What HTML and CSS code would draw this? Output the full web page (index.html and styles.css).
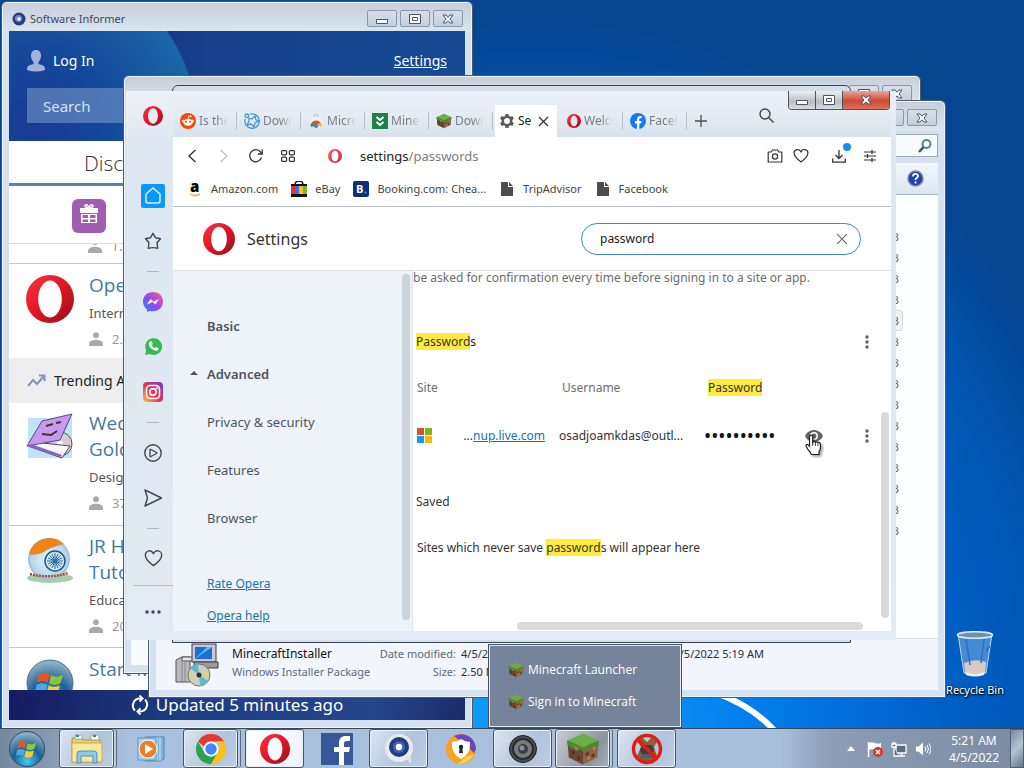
FILE: index.html
```html
<!DOCTYPE html>
<html lang="en">
<head>
<meta charset="utf-8">
<title>Desktop</title>
<link rel="stylesheet" href="styles.css">
</head>
<body>
<svg class="defs" aria-hidden="true">
  <defs>
    <linearGradient id="red" x1="0" y1="0" x2="1" y2="1"><stop offset="0" stop-color="#ff3340"/><stop offset=".5" stop-color="#e01526"/><stop offset="1" stop-color="#980d18"/></linearGradient>
    <linearGradient id="msg" x1="0" y1="1" x2="1" y2="0"><stop offset="0" stop-color="#1592ff"/><stop offset=".5" stop-color="#9a45f5"/><stop offset="1" stop-color="#ff6670"/></linearGradient>
    <linearGradient id="insta" x1="0" y1="1" x2="1" y2="0"><stop offset="0" stop-color="#fdc44f"/><stop offset=".45" stop-color="#e8364f"/><stop offset="1" stop-color="#7638c8"/></linearGradient>
    <radialGradient id="orb" cx=".5" cy=".85" r=".8"><stop offset="0" stop-color="#3fd0ec"/><stop offset=".5" stop-color="#1c5f93"/><stop offset="1" stop-color="#8fb0c6"/></radialGradient>
    <radialGradient id="ball" cx=".5" cy=".5" r=".6"><stop offset="0" stop-color="#e8f4fb"/><stop offset=".7" stop-color="#b7d8ec"/><stop offset="1" stop-color="#6f9ab4"/></radialGradient>
  </defs>
  <symbol id="opera" viewBox="0 0 24 24"><path fill="url(#red)" fill-rule="evenodd" d="M12 0a12 12 0 1 0 0 24 12 12 0 0 0 0-24zm0 2.800c3.300 0 5.900 4.100 5.900 9.200s-2.600 9.200-5.900 9.200S6.100 17.100 6.100 12 8.700 2.800 12 2.800z"/></symbol>
  <symbol id="block" viewBox="0 0 24 24"><path fill="#6cae45" d="M12 1 23 6 12 11 1 6z"/><path fill="#6a4630" d="M1 6l11 5v12L2 18z"/><path fill="#8d6243" d="M23 6l-11 5v12l10-5z"/><path fill="#4c8a30" d="M1 6l11 5v3l-2-2-2 2-2-3-2 1-3-3zM23 6l-11 5v3l2-2 2 1 2-3 2 1 3-2z"/><path fill="#4a2f1f" d="M4 13l2 1v2l-2-1zM8 17l2 1v2l-2-1zM14 15l2-1v2l-2 1zM18 16l2-1v2l-2 1z"/><path fill="#b08660" d="M15 18l2-1v2l-2 1zM19 11l2-1v2l-2 1zM6 10l2 1v2l-2-1z"/></symbol>
  <symbol id="winflag" viewBox="0 0 24 24"><path fill="#e8532a" d="M3 5c3-2 5-2 8 0l-1.500 6c-3-1.500-5-1.500-8 0z"/><path fill="#8cc63e" d="M12 5.500c3 1.500 5 1.500 9-.5l-2 6.500c-3 1.500-5 1.500-8.500 0z"/><path fill="#4aa8e8" d="M1.200 12.500c3-1.500 5-1.500 8 0l-1.500 6c-3-1.500-5-1.500-7.700 0z"/><path fill="#fcc92e" d="M10.300 13c3 1.500 5 1.500 8.500 0l-2 6.500c-3 1.500-5 1.500-8 0z"/></symbol>
  <symbol id="user" viewBox="0 0 14 14"><circle cx="7" cy="3.200" r="2.900"/><path d="M0 14v-2c0-3 4-4.300 7-4.300s7 1.300 7 4.300v2z"/></symbol>
  <symbol id="heart" viewBox="0 0 20 20"><path d="M10 17.500C4 13 1.500 10.500 1.500 7a4.300 4.300 0 0 1 8.500-1.500A4.300 4.300 0 0 1 18.500 7c0 3.500-2.500 6-8.500 10.500z"/></symbol>
  <symbol id="page" viewBox="0 0 12 14"><path fill="#4d4d4d" d="M0 0h7v5h5v9H0z"/><path fill="#4d4d4d" d="M8 0l4 4H8z"/></symbol>
  <symbol id="cx" viewBox="0 0 12 10"><path d="M1 1h3l2 2.200L8 1h3L8 5l3 4H8L6 6.800 4 9H1l3-4z" fill="#fff" stroke="#4b5366" stroke-width="1"/></symbol>
  <symbol id="cmax" viewBox="0 0 12 10"><path d="M.5.500h11v9H.5zM3.500 3.500h5v3h-5z" fill="#fff" stroke="#4b5366"/></symbol>
  <symbol id="cmin" viewBox="0 0 12 10"><path d="M.5 5.500h11v4H.5z" fill="#fff" stroke="#4b5366"/></symbol>
  <symbol id="dotsv" viewBox="0 0 4 14"><circle cx="2" cy="2" r="1.700"/><circle cx="2" cy="7" r="1.700"/><circle cx="2" cy="12" r="1.700"/></symbol>
</svg>

<main class="desktop">
  <svg class="swoosh" viewBox="0 0 120 40" aria-hidden="true"><path d="M-4 -4Q38 8 64 36" fill="none" stroke="#fff" stroke-width="6"/></svg>
  <a class="bin" href="#bin">
    <svg width="38" height="46" viewBox="0 0 38 46"><path d="M2 3l6 39q11 5 22 0l6-39z" fill="#5a9bdc" fill-opacity=".75" stroke="#b8d8f0"/><path d="M8 32q10-5 22-1l-1 11q-10 4-20 0z" fill="#d9c9c4"/><path d="M10 41q9 4 18 0v3q-9 3-18 0z" fill="#e9eef2"/><path d="M10 8l4 26M28 8l-3 24M30 20l4-5" stroke="#2c6fba" stroke-width="1.500" fill="none"/><ellipse cx="19" cy="4" rx="17.500" ry="3.300" fill="#6d92ac" stroke="#dcebf5" stroke-width="1.500"/></svg>
    <span>Recycle Bin</span>
  </a>

  <section class="window informer" aria-label="Software Informer">
    <header class="titlebar">
      <svg width="14" height="14" viewBox="0 0 14 14"><circle cx="7" cy="7" r="6.500" fill="#243c80"/><circle cx="6.500" cy="6.500" r="3.600" fill="#6d86c2"/><circle cx="7" cy="7" r="1.800" fill="#fff"/></svg>
      <h1>Software Informer</h1>
      <div class="caption">
        <button aria-label="Minimize"><svg width="12" height="10"><use href="#cmin"/></svg></button>
        <button aria-label="Maximize"><svg width="12" height="10"><use href="#cmax"/></svg></button>
        <button aria-label="Close"><svg width="12" height="10"><use href="#cx"/></svg></button>
      </div>
    </header>
    <div class="informer-body">
      <div class="hero">
        <div class="hero-top">
          <svg width="18" height="22" viewBox="0 0 18 22" fill="#a3b2dc"><path d="M9 0c3.500 0 5 2.500 5 5.500S12.500 11 11.500 12v2c4 1 6.500 2 6.500 5v1q-9 3-18 0v-1c0-3 2.500-4 6.500-5v-2C5.500 11 4 8.500 4 5.500S5.500 0 9 0z"/></svg>
          <a href="#login">Log In</a>
          <a class="hero-settings" href="#settings">Settings</a>
        </div>
        <input class="hero-search" type="search" placeholder="Search" aria-label="Search software">
      </div>
      <div class="disc">Discover</div>
      <div class="gift"><svg width="34" height="34" viewBox="0 0 34 34"><rect width="34" height="34" rx="6" fill="#a15db0"/><path fill="#fff" d="M8 9h18v5H8zM9 15h16v9H9z"/><path d="M17 9c-5 0-5-4-2-3l2 2 2-2c3-1 3 3-2 3z" fill="none" stroke="#fff" stroke-width="1.500"/><path d="M10.500 16h5.500v3h-5.500zM18 16h5.500v3H18zM10.500 20.500h5.500v2.500h-5.500zM18 20.500h5.500v2.500H18z" fill="#a15db0"/></svg></div>
      <div class="applist">
      <div class="cutoff"><p class="users"><svg width="14" height="14"><use href="#user"/></svg>1.2M</p></div>
      <article class="app">
        <svg width="48" height="48"><use href="#opera"/></svg>
        <div><h2>Opera</h2><p>Internet</p><p class="users"><svg width="14" height="14"><use href="#user"/></svg>2.5M</p></div>
      </article>
      <h3 class="trending"><svg width="19" height="14" viewBox="0 0 19 14"><path d="M1 12l5-6 4 4 7-8M12 1.500h5.500V7" fill="none" stroke="#8790c0" stroke-width="2"/></svg>Trending Apps</h3>
      <article class="app">
        <svg width="48" height="48" viewBox="0 0 48 48"><rect x="2" y="5" width="44" height="40" fill="#bfe4f7"/><circle cx="34" cy="31" r="12" fill="#d8cfd4" stroke="#555"/><circle cx="34" cy="31" r="3" fill="#fff"/><path d="M2 33l34 12 8-12-36-4z" fill="#f6f6fa" stroke="#4c4560"/><path d="M16 8L46 1 34 27 1 33z" fill="#c79af0" stroke="#5d4380"/><path d="M20 13l7-2M30 10l5-1M16 21l9 1 6-4" stroke="#4b302c" stroke-width="2" fill="none"/><path d="M1 33l34 11 1-2L5 31z" fill="#8a62c4"/></svg>
        <div><h2>Wedding<br>Gold</h2><p>Design</p><p class="users"><svg width="14" height="14"><use href="#user"/></svg>37K</p></div>
      </article>
      <article class="app">
        <svg width="48" height="48" viewBox="0 0 48 48"><ellipse cx="24" cy="42" rx="23" ry="5" fill="#a9ccae"/><circle cx="23" cy="23" r="21" fill="url(#ball)"/><path d="M3 18A21 21 0 0 1 38 8Q24 11 16 17 8 20 3 18z" fill="#f08419"/><circle cx="29" cy="25" r="10" fill="#cfe8f5" stroke="#1d588c" stroke-width="1.500"/><path d="M29 17v16M21 25h16M23.500 19.500l11 11M34.500 19.500l-11 11M26 18l6 14M32 18l-6 14M22 22l14 6M22 28l14-6" stroke="#27689a"/><path d="M4 38q20 5 38-1" stroke="#a94a35" stroke-width="2.500" stroke-dasharray="2 1" fill="none"/></svg>
        <div><h2>JR Hindi<br>Tutor</h2><p>Education</p><p class="users"><svg width="14" height="14"><use href="#user"/></svg>20K</p></div>
      </article>
      <article class="app">
        <svg width="48" height="48" viewBox="0 0 48 48"><circle cx="24" cy="24" r="23" fill="url(#orb)" stroke="#4d6f8a"/><svg x="9" y="9" width="32" height="32"><use href="#winflag"/></svg></svg>
        <div><h2>Start Menu</h2></div>
      </article>
      </div>
      <footer class="updated"><svg width="18" height="20" viewBox="0 0 18 20" fill="none" stroke="#fff" stroke-width="2"><path d="M4 15.500A7 7 0 0 1 9 3.500h2M14 4.500a7 7 0 0 1-5 12H7"/><path d="M8.500.5l3 3-3 3M9.500 13.500l-3 3 3 3"/></svg>Updated 5 minutes ago</footer>
    </div>
  </section>

  <section class="window backdrop" aria-label="Background window">
    <div class="caption">
      <button aria-label="Maximize"><svg width="12" height="10"><use href="#cmax"/></svg></button>
      <button aria-label="Close"><svg width="12" height="10"><use href="#cx"/></svg></button>
    </div>
    <div class="backdrop-body"></div>
  </section>

  <section class="window explorer" aria-label="Explorer">
    <div class="caption">
      <button aria-label="Maximize"><svg width="12" height="10"><use href="#cmax"/></svg></button>
      <button aria-label="Close"><svg width="12" height="10"><use href="#cx"/></svg></button>
    </div>
    <div class="explorer-search"><svg width="14" height="14" viewBox="0 0 14 14" fill="none"><circle cx="8.500" cy="5" r="4" stroke="#4c8593" stroke-width="2"/><path d="M5.500 8L1 13" stroke="#35517e" stroke-width="2.500"/></svg></div>
    <div class="explorer-tools"><svg width="17" height="17" viewBox="0 0 17 17"><circle cx="8.500" cy="8.500" r="7.500" fill="#2441a4" stroke="#7b8bac" stroke-width="1.500"/><path d="M6 6.500c0-3.500 5-3.300 5-.5 0 1.800-2.500 1.700-2.500 4M8.500 11.500v2" stroke="#fff" stroke-width="1.800" fill="none"/></svg></div>
    <ul class="sizes"><li>KB</li><li>KB</li><li>KB</li><li>KB</li><li class="picked">KB</li><li>KB</li><li>KB</li><li>KB</li><li>KB</li><li>KB</li><li>KB</li><li>KB</li><li>KB</li><li>KB</li><li>KB</li></ul>
    <div class="details">
      <svg width="46" height="46" viewBox="0 0 46 46"><path d="M2 18l6-3h8v25H2z" fill="#b9b9be" stroke="#55555c"/><path d="M8 15h12v4H8z" fill="#e2e2e5" stroke="#55555c"/><path d="M8 19v22M11 20v20" stroke="#888"/><rect x="18" y="2" width="24" height="18" fill="#c9c6d6" stroke="#3c3c55"/><rect x="21" y="5" width="17" height="12" fill="#1a6fd0"/><path d="M21 17L33 5h5z" fill="#45c8f5"/><path d="M20 20h24v6H20z" fill="#9d9aa3" stroke="#3c3c44"/><circle cx="25" cy="33" r="11" fill="#c9cfc4" stroke="#70766c"/><path d="M25 33L16 26a11 11 0 0 1 8-4zM25 33l9 6a11 11 0 0 1-8 5z" fill="#5ebdc0"/><path d="M25 33l10-4v5zM25 33l-10 4v-5z" fill="#e6cf7e"/><circle cx="25" cy="33" r="2.500" fill="#333"/></svg>
      <div class="details-name"><strong>MinecraftInstaller</strong><span>Windows Installer Package</span></div>
      <dl><dt>Date modified:</dt><dd>4/5/2022 5:19 AM</dd><dt>Size:</dt><dd>2.50 MB</dd></dl>
      <p class="created">Date created: 4/5/2022 5:19 AM</p>
    </div>
  </section>

  <div class="outline"></div>

  <section class="opera" aria-label="Opera">
    <nav class="rail" aria-label="Sidebar">
      <button class="rail-logo" aria-label="Opera menu"><svg width="20" height="20"><use href="#opera"/></svg></button>
      <button class="rail-home" aria-label="Home"><svg width="16" height="18" viewBox="0 0 16 18"><path d="M1 7l7-6 7 6v7q0 2-2 2H3q-2 0-2-2z" fill="none" stroke="#d9f2ff" stroke-width="1.500"/></svg></button>
      <button aria-label="Bookmarks"><svg width="18" height="18" viewBox="0 0 18 18"><path d="M9 1.300l2.500 4.400 5 1-3.400 3.800.6 5.800q-4.700-1.300-9.400 0l.6-5.800L1.500 6.700l5-1z" fill="none" stroke="#3f4756" stroke-width="1.400" stroke-linejoin="round"/></svg></button>
      <hr>
      <button aria-label="Messenger"><svg width="20" height="20" viewBox="0 0 20 20"><path d="M10 0c6 0 10 4.200 10 9.600S16 19.300 10 19.300q-1.600 0-3-.4L4 20v-2.600C1.500 15.600 0 13 0 9.600 0 4.200 4 0 10 0z" fill="url(#msg)"/><path d="M4 12.500l3.500-5.500 3 2.500L16 7l-3.500 5.500-3-2.500z" fill="#fff"/></svg></button>
      <button aria-label="WhatsApp"><svg width="17" height="17" viewBox="0 0 17 17"><path d="M0 17l1.200-4.500A8.400 8.400 0 1 1 4.700 16z" fill="#36b853"/><path d="M5 3.500l1.500-.2 1.300 2.700-1 1.200c.8 1.500 1.800 2.400 3.200 3l1.200-1.200 2.500 1.300c0 2-1.700 2.700-3 2.400C7 12 4.500 9.500 3.800 6.500 3.600 5.200 4 4.200 5 3.500z" fill="#fff"/></svg></button>
      <button aria-label="Instagram"><svg width="20" height="20" viewBox="0 0 20 20"><rect width="20" height="20" rx="4" fill="url(#insta)"/><g fill="none" stroke="#fff" stroke-width="1.600"><rect x="3.500" y="3.500" width="13" height="13" rx="3.500"/><circle cx="10" cy="10" r="3.200"/></g><circle cx="13.800" cy="6.200" r="1" fill="#fff"/></svg></button>
      <hr>
      <button aria-label="Player"><svg width="18" height="18" viewBox="0 0 18 18" fill="none" stroke="#3f4756" stroke-width="1.400"><circle cx="9" cy="9" r="8.200"/><path d="M6 6q0-1 1-.5l5.500 3q.8.500 0 1l-5.500 3q-1 .5-1-.5z"/></svg></button>
      <button aria-label="Flow"><svg width="18" height="18" viewBox="0 0 18 18"><path d="M1 1l16.500 8L1 17l2.500-8z" fill="none" stroke="#3f4756" stroke-width="1.400" stroke-linejoin="round"/></svg></button>
      <hr>
      <button aria-label="Favourites"><svg width="19" height="19" fill="none" stroke="#3f4756" stroke-width="1.500"><use href="#heart"/></svg></button>
      <button class="rail-more" aria-label="More"><svg width="16" height="4" fill="#3f4756"><circle cx="2" cy="2" r="1.700"/><circle cx="8" cy="2" r="1.700"/><circle cx="14" cy="2" r="1.700"/></svg></button>
    </nav>

    <div class="browser">
      <div class="tabstrip">
        <button class="tab"><svg width="16" height="16" viewBox="0 0 16 16"><circle cx="8" cy="8" r="8" fill="#ff4500"/><ellipse cx="8" cy="9.300" rx="4.800" ry="3.500" fill="#fff"/><circle cx="3.300" cy="8" r="1.300" fill="#fff"/><circle cx="12.700" cy="8" r="1.300" fill="#fff"/><circle cx="10.500" cy="3.300" r="1" fill="#fff"/><path d="M8 6l.6-3 2 .4" stroke="#fff" stroke-width=".8" fill="none"/><circle cx="6" cy="8.700" r="1" fill="#ff4500"/><circle cx="10" cy="8.700" r="1" fill="#ff4500"/></svg><span>Is there</span></button>
        <button class="tab"><svg width="16" height="16" viewBox="0 0 16 16" fill="none" stroke="#4a93d4" stroke-width="1.300"><path d="M6 1.200A7.200 7.200 0 1 1 1.200 6"/><path d="M5 5l3 1 3-3 1 4 3 1-4 2-1 4-3-3-4 1 2-4z"/><circle cx="2.800" cy="2.800" r="1.800"/></svg><span>Download</span></button>
        <button class="tab"><svg width="16" height="16" viewBox="0 0 16 16"><path d="M2 7l2-3h8l2 3v7H2z" fill="#eceef0"/><path d="M6 4q0-3 2-3t2 3" fill="none" stroke="#b8bfc6"/><path d="M2.500 13a5.500 5.500 0 0 1 11 0z" fill="#dd4b3e"/><path d="M2.500 14l2-4.500L8 13z" fill="#2e9e57"/><path d="M13.500 14l-1-4L8 11.500z" fill="#f7c52d"/><circle cx="8" cy="13" r="2" fill="#3f7fe0"/></svg><span>Microsoft</span></button>
        <button class="tab"><svg width="16" height="16" viewBox="0 0 16 16"><path d="M0 0h16v16H0z" fill="#1f8048"/><path d="M4.500 4L8 7l3.500-3M4.500 9L8 12l3.500-3" stroke="#fff" stroke-width="1.800" fill="none"/></svg><span>Minecraft</span></button>
        <button class="tab"><svg width="16" height="16"><use href="#block"/></svg><span>Download</span></button>
        <div class="tab active"><svg width="16" height="16" viewBox="0 0 16 16"><path fill="#5b5b5b" fill-rule="evenodd" d="M6.500 1h3l.4 2 1.500.8 2-.7 1.500 2.600L13.400 7v2l1.500 1.300-1.500 2.600-2-.7-1.500.8-.4 2h-3l-.4-2-1.500-.8-2 .7-1.500-2.600L2.600 9V7L1.100 5.700l1.500-2.600 2 .7L6.100 3zM8 5a3 3 0 1 0 0 6 3 3 0 0 0 0-6z"/></svg><span>Settings</span><button aria-label="Close tab"><svg width="11" height="11" viewBox="0 0 11 11"><path d="M1 1l9 9M10 1l-9 9" stroke="#333" stroke-width="1.300"/></svg></button></div>
        <button class="tab"><svg width="14" height="14"><use href="#opera"/></svg><span>Welcome</span></button>
        <button class="tab"><svg width="16" height="16" viewBox="0 0 16 16"><circle cx="8" cy="8" r="8" fill="#1877f2"/><path fill="#fff" d="M7 16v-5.500H5V8h2V6.500C7 4 8.500 3 10.200 3l1.400.1v2.100h-1c-1 0-1.300.6-1.300 1.300V8h2.200l-.4 2.500H9.300V16z"/></svg><span>Facebook</span></button>
        <button class="newtab" aria-label="New tab"><svg width="12" height="12"><path d="M6 0v12M0 6h12" stroke="#4a4f59" stroke-width="1.300"/></svg></button>
        <button class="find" aria-label="Search tabs"><svg width="15" height="15" viewBox="0 0 15 15" fill="none" stroke="#3f4552" stroke-width="1.400"><circle cx="6" cy="6" r="5"/><path d="M9.800 9.800l4.700 4.700"/></svg></button>
        <div class="caption live">
          <button aria-label="Minimize"><svg width="12" height="10"><use href="#cmin"/></svg></button>
          <button aria-label="Maximize"><svg width="12" height="10"><use href="#cmax"/></svg></button>
          <button class="close" aria-label="Close"><svg width="12" height="10"><use href="#cx"/></svg></button>
        </div>
      </div>

      <div class="address">
        <button aria-label="Back"><svg width="14" height="14" viewBox="-2 0 14 14"><path d="M8.500 1L2 7l6.500 6" fill="none" stroke="#333" stroke-width="1.400"/></svg></button>
        <button aria-label="Forward"><svg width="14" height="14" viewBox="-2 0 14 14"><path d="M1.500 1L8 7l-6.500 6" fill="none" stroke="#c4c4c4" stroke-width="1.400"/></svg></button>
        <button aria-label="Reload"><svg width="14" height="14" viewBox="0 0 14 14" fill="none" stroke="#333" stroke-width="1.300"><path d="M12.500 8.500A6 6 0 1 1 11.500 3L13 5"/><path d="M13.200.5V5H8.800"/></svg></button>
        <button aria-label="Speed dial"><svg width="14" height="12" viewBox="0 0 14 12" fill="none" stroke="#333" stroke-width="1.200"><rect x=".6" y=".6" width="5" height="4.200" rx="1"/><rect x="8.400" y=".6" width="5" height="4.200" rx="1"/><rect x=".6" y="7.200" width="5" height="4.200" rx="1"/><rect x="8.400" y="7.200" width="5" height="4.200" rx="1"/></svg></button>
        <svg class="site" width="14" height="14"><use href="#opera"/></svg>
        <p class="url">settings<span>/passwords</span></p>
        <button aria-label="Snapshot"><svg width="16" height="14" viewBox="0 0 16 14" fill="none" stroke="#333" stroke-width="1.200"><path d="M1.200 3h3l1.300-2h5l1.300 2h3v10H1.200z" stroke-linejoin="round"/><circle cx="8" cy="7.500" r="2.600"/></svg></button>
        <button class="fav" aria-label="Add bookmark"><svg width="16" height="16" fill="none" stroke="#333" stroke-width="1.500"><use href="#heart"/></svg></button>
        <button class="dl" aria-label="Downloads"><svg width="14" height="14" viewBox="0 0 14 14" fill="none" stroke="#333" stroke-width="1.300"><path d="M7 1v8.500M3.500 6L7 9.500 10.500 6M.7 9.500v3.700h12.600V9.500"/></svg></button>
        <button aria-label="Easy setup"><svg width="12" height="12" viewBox="0 0 12 12" fill="none" stroke="#333" stroke-width="1.200"><path d="M0 2h12M0 6h12M0 10h12M8 0v4M3.500 4v4M8 8v4"/></svg></button>
      </div>

      <nav class="bookmarks" aria-label="Bookmarks bar">
        <a href="#amazon"><svg width="16" height="16" viewBox="0 0 16 16"><text x="3" y="11" font-family="Open Sans" font-weight="800" font-size="15">a</text><path d="M3 13q6 3 10 0" stroke="#f2a531" stroke-width="1.300" fill="none"/></svg>Amazon.com</a>
        <a href="#ebay"><svg width="16" height="16" viewBox="0 0 16 16"><path d="M4 4q0-4 4-4t4 4" fill="none" stroke="#111" stroke-width="1.500"/><path d="M0 3h16v13H0z" fill="#111"/><path d="M0 5h4v8H0z" fill="#e53238"/><path d="M4 5h4v8H4z" fill="#3e6fe0"/><path d="M8 5h4v8H8z" fill="#f5c518"/><path d="M12 5h4v8h-4z" fill="#7fb52c"/></svg>eBay</a>
        <a href="#booking"><svg width="16" height="16" viewBox="0 0 16 16"><rect width="16" height="16" rx="2" fill="#0b2f7c"/><text x="3" y="12" font-family="Open Sans" font-weight="700" font-size="11" fill="#fff">B</text><circle cx="12.500" cy="11.500" r="1" fill="#35b5f5"/></svg>Booking.com: Chea...</a>
        <a href="#tripadvisor"><svg width="16" height="14"><use href="#page"/></svg>TripAdvisor</a>
        <a href="#facebook"><svg width="16" height="14"><use href="#page"/></svg>Facebook</a>
      </nav>

      <header class="settings-head">
        <svg width="32" height="32"><use href="#opera"/></svg>
        <h1>Settings</h1>
        <div class="searchbox"><input type="text" value="password" aria-label="Search settings"><button aria-label="Clear search"><svg width="10" height="10"><path d="M0 0l10 10M10 0L0 10" stroke="#6b6b6b" stroke-width="1.200"/></svg></button></div>
      </header>

      <div class="settings">
        <nav class="menu" aria-label="Settings sections">
          <a class="strong" href="#basic">Basic</a>
          <a class="strong open" href="#advanced">Advanced</a>
          <a href="#privacy">Privacy &amp; security</a>
          <a href="#features">Features</a>
          <a href="#browser">Browser</a>
          <div class="help"><a href="#rate">Rate Opera</a><a href="#help">Opera help</a></div>
        </nav>
        <div class="panel">
          <p class="note">be asked for confirmation every time before signing in to a site or app.</p>
          <div class="panel-title"><h2><mark>Password</mark>s</h2><button aria-label="More actions"><svg width="4" height="14" fill="#5f6368"><use href="#dotsv"/></svg></button></div>
          <table>
            <thead><tr><th class="c-site">Site</th><th class="c-user">Username</th><th class="c-pass"><mark>Password</mark></th><th class="c-eye"></th><th></th></tr></thead>
            <tbody><tr>
              <td><div class="sitecell"><svg width="15" height="15" viewBox="0 0 15 15"><path fill="#dd5128" d="M0 0h7v7H0z"/><path fill="#7db51c" d="M8 0h7v7H8z"/><path fill="#0f9be8" d="M0 8h7v7H0z"/><path fill="#fbb50d" d="M8 8h7v7H8z"/></svg><span>...<a href="#live">nup.live.com</a></span></div></td>
              <td>osadjoamkdas@outl...</td>
              <td><input type="password" value="password12" readonly aria-label="Saved password"></td>
              <td><button class="eye" aria-label="Show password"><svg width="18" height="12" viewBox="0 0 18 12"><path fill="#666" fill-rule="evenodd" d="M9 0C5 0 1.500 2.400 0 6c1.500 3.600 5 6 9 6s7.500-2.400 9-6c-1.500-3.600-5-6-9-6zm0 2a4 4 0 1 1 0 8 4 4 0 0 1 0-8z"/><circle cx="9" cy="6" r="2.400" fill="#666"/></svg><svg class="hand" width="19" height="22" viewBox="0 0 21 24"><path d="M6 1.500q1.800-1 2.500 1V9q1.500-1.500 3 0 1.500-1 2.800.3 1.700-.6 2.700 1v5q0 2-1.500 4v3.200H7q-1-3-4-6L1 13q0-2 2-1.500l2 2v-11z" fill="#fff" stroke="#222" stroke-width="1.300"/><path d="M8.500 9v4M11.500 9.500V13M14.300 10v3" stroke="#222"/></svg></button></td>
              <td><button aria-label="More"><svg width="4" height="14" fill="#5f6368"><use href="#dotsv"/></svg></button></td>
            </tr></tbody>
          </table>
          <h2 class="saved">Saved</h2>
          <p class="never">Sites which never save <mark>password</mark>s will appear here</p>
          <i class="bar-v"></i><i class="bar-h"></i>
        </div>
      </div>
    </div>
  </section>

  <div class="jump">
    <button><svg width="16" height="16"><use href="#block"/></svg>Minecraft Launcher</button>
    <button><svg width="16" height="16"><use href="#block"/></svg>Sign in to Minecraft</button>
  </div>
</main>

<footer class="taskbar">
  <button class="start" aria-label="Start"><svg width="36" height="36" viewBox="0 0 36 36"><circle cx="18" cy="18" r="17.500" fill="url(#orb)" stroke="#2d4a63"/><svg x="7" y="7" width="23" height="23"><use href="#winflag"/></svg></svg></button>
  <div class="tasks">
    <button class="on stack" aria-label="Explorer"><svg width="34" height="30" viewBox="0 0 34 30"><path d="M2 4h9l2 2h17v22H2z" fill="#e9cf72" stroke="#b8943a"/><path d="M5 1h7v4H5zM21 1h8v5h-8z" fill="#fff" stroke="#9aa"/><path d="M6 2h3M23 2h3" stroke="#2f9a4a" stroke-width="2"/><path d="M2 9h30v19H2z" fill="#f8e79c" stroke="#cba94c"/><path d="M7 29v-9q0-3 3-3h14q3 0 3 3v9h-4v-7H11v7z" fill="#8bcbe8" stroke="#4a94bd"/></svg></button>
    <button aria-label="Media Player"><svg width="28" height="26" viewBox="0 0 28 26"><path d="M8 1h19v22l-4 2H8z" fill="#7fb3da" stroke="#4b84b2"/><path d="M20 1v24M23 1v24" stroke="#d2e8f7"/><rect x="1" y="2" width="18" height="22" fill="#a9d2ee" stroke="#5c98c4"/><circle cx="11" cy="13" r="9" fill="#ee8024" stroke="#fff"/><path d="M8 8l8 5-8 5z" fill="#fff"/></svg></button>
    <button class="on stack" aria-label="Chrome"><svg width="30" height="30" viewBox="0 0 30 30"><path d="M2 7.500A15 15 0 0 1 28 7.500H15a7.500 7.500 0 0 0-7 5z" fill="#e33b2e"/><path d="M28 7.500A15 15 0 0 1 15 30l6.500-11.200a7.500 7.500 0 0 0-1-11.300z" fill="#fbc116"/><path d="M2 7.500A15 15 0 0 0 15 30l6.500-11.200A7.500 7.500 0 0 1 8.500 18.800z" fill="#2ba24c"/><circle cx="15" cy="15" r="7.500" fill="#fff"/><circle cx="15" cy="15" r="5.700" fill="#4285f4"/></svg></button>
    <button class="on lit" aria-label="Opera"><svg width="30" height="30"><use href="#opera"/></svg></button>
    <button aria-label="Facebook"><svg width="32" height="32" viewBox="0 0 32 32"><path d="M0 0h32v32H0z" fill="#3a569b"/><path fill="#fff" d="M18 32V19h-5v-5h5v-4c0-4.500 2.500-7 7-7h4v5h-3c-2 0-3 .8-3 2.500V14h6l-1 5h-5v13z"/></svg></button>
    <button class="on" aria-label="Software Informer"><svg width="32" height="32" viewBox="0 0 32 32"><circle cx="16" cy="15" r="14" fill="#e8eaee"/><path d="M22 24l6 7v-9z" fill="#dfe3ea"/><circle cx="16" cy="14" r="10" fill="#1f3f86"/><circle cx="16" cy="14" r="6" fill="#4664a8"/><circle cx="16" cy="14" r="3.200" fill="#fff"/></svg></button>
    <button aria-label="Avast Secure Browser"><svg width="30" height="30" viewBox="0 0 30 30"><circle cx="15" cy="15" r="15" fill="#f9a01d"/><path d="M8 2a15 15 0 0 1 22 13l-2 4-8-8z" fill="#6a45c8"/><path d="M28 20a15 15 0 0 1-16 9.500l8-7z" fill="#fbd04a"/><path d="M15 5q4 3 9 3 1 12-9 17Q5 20 6 8q5 0 9-3z" fill="#fff"/><circle cx="15" cy="13" r="2.200" fill="#223"/><path d="M14 13h2l1 6h-4z" fill="#223"/></svg></button>
    <button class="on" aria-label="Sound"><svg width="28" height="28" viewBox="0 0 28 28"><circle cx="14" cy="14" r="13.500" fill="#4a4d50" stroke="#1e1e20"/><circle cx="14" cy="14" r="10" fill="#777b7e" stroke="#2a2b2d" stroke-width="2"/><circle cx="14" cy="14" r="5" fill="#3c3e40"/><circle cx="13" cy="13" r="2.500" fill="#8d9194"/></svg></button>
    <button class="on stack dim" aria-label="Minecraft"><svg width="34" height="34"><use href="#block"/></svg></button>
    <button class="on" aria-label="Blocked app"><svg width="32" height="32" viewBox="0 0 32 32"><path d="M8 5h4l4 4 4-4h4l2 4-3 5 3 9-4 5H10l-4-5 4-9-3-5z" fill="#8a6038"/><path d="M11 12h10l2 5-2 5H11l-2-5z" fill="#3b3f38"/><path d="M11 21h10l2 4H9z" fill="#41617c"/><circle cx="16" cy="16" r="13.500" fill="none" stroke="#dc2014" stroke-width="3.500"/><path d="M7 7l18 18" stroke="#dc2014" stroke-width="3.500"/></svg></button>
  </div>
  <div class="tray">
    <button aria-label="Show hidden icons"><svg width="8" height="5"><path d="M0 5l4-5 4 5z" fill="#fff"/></svg></button>
    <button aria-label="Action Center"><svg width="16" height="16" viewBox="0 0 16 16"><path d="M1.500 1v15" stroke="#fff" stroke-width="1.500"/><path d="M2 2q3-1.500 6 0t6 0v7q-3 1.500-6 0t-6 0z" fill="#fff"/><circle cx="11" cy="11" r="5" fill="#d3362f"/><path d="M9 9l4 4M13 9l-4 4" stroke="#fff" stroke-width="1.500"/></svg></button>
    <button aria-label="Network"><svg width="16" height="16" viewBox="0 0 16 16" fill="#5b6c84" stroke="#fff" stroke-width="1.300"><path d="M5 4h10v8H5zM7 15h7M10.500 12v3"/><path d="M1 3h4v3H1zM2 1v2M4 1v2M3 6v9h4"/></svg></button>
    <button aria-label="Volume"><svg width="16" height="16" viewBox="0 0 16 16"><path d="M1 5.500h2.500L8 1.500v13L3.500 10.500H1z" fill="#fff"/><path d="M10 5.500q2 2.500 0 5M12 4q3 4 0 8M14 2.500q4 5.500 0 11" fill="none" stroke="#fff"/></svg></button>
    <time class="clock">5:21 AM<br>4/5/2022</time>
    <button class="peek" aria-label="Show desktop"></button>
  </div>
</footer>
</body>
</html>
```

FILE: styles.css
```css
* { box-sizing: border-box; }
body {
  margin: 0;
  height: 100vh;
  display: flex;
  flex-direction: column;
  overflow: hidden;
  font: 12px/16px "Noto Sans", "Open Sans", sans-serif;
  color: #333;
}
h1, h2, h3, p, ul, dl, dd { margin: 0; padding: 0; font-weight: 400; }
button, input { font: inherit; color: inherit; border: 0; padding: 0; margin: 0; background: none; outline: 0; }
button { display: flex; align-items: center; justify-content: center; }
a { color: inherit; text-decoration: none; }
svg { flex: none; display: block; }
.defs { position: absolute; width: 0; height: 0; }

.desktop {
  position: relative;
  flex: 1;
  overflow: hidden;
  background: radial-gradient(ellipse 600px 720px at 540px 740px, #16a4ff 0, #0280ee 34%, #0064cf 62%, #0055b0 86%, #064590 100%);
}
.swoosh { position: absolute; left: 710px; top: 694px; width: 120px; height: 40px; }
.bin {
  position: absolute; left: 936px; top: 631px; width: 78px;
  display: flex; flex-direction: column; align-items: center; gap: 5px;
  color: #fff; font-size: 11px; text-shadow: 1px 1px 2px #000, 0 1px 2px #000; white-space: nowrap;
}

.window {
  position: absolute;
  border: 1px solid #4b5b6e;
  border-radius: 6px 6px 0 0;
  background: #d5e1ee linear-gradient(#c4cfda, #dce5ee 30px) top / 100% 30px no-repeat;
  box-shadow: inset 0 0 0 1px #eef4fa;
}
.caption { display: flex; gap: 3px; }
.caption button {
  width: 30px; height: 17px;
  border: 1px solid #8998aa; border-radius: 2px;
  background: linear-gradient(#d6dfe8, #c4cfdb);
}

/* Software Informer */
.informer { left: 1px; top: 1px; width: 472px; height: 728px; padding: 0 7px 8px; display: flex; flex-direction: column; }
.titlebar { height: 29px; padding: 4px 2px 0 3px; display: flex; align-items: center; gap: 4px; flex: none; }
.titlebar h1 { flex: 1; font-size: 11px; color: #3f4a57; }
.informer-body { flex: 1; min-height: 0; display: flex; flex-direction: column; overflow: hidden; background: #fff; }
.hero {
  flex: none; height: 110px; padding: 19px 18px 0;
  background:
    radial-gradient(circle 160px at 28px 92px, #1b3a94 0, #14489a 45%, #1a66a8 99%, transparent 100%),
    linear-gradient(90deg, #13237a, #16408c 45%, #174a94);
  color: #fff; font-size: 14px;
}
.hero-top { display: flex; align-items: center; gap: 8px; height: 22px; }
.hero-settings { margin-left: auto; text-decoration: underline; }
.hero-search { display: block; width: 100%; height: 35px; margin-top: 16px; padding: 0 16px; background: #6b8fc4aa; font-size: 15px; }
.hero-search::placeholder { color: #d4e1f5; opacity: 1; }
.disc { flex: none; height: 45px; padding-left: 75px; border-bottom: 3px solid #5484b5; font: 300 21px/44px "Open Sans", sans-serif; color: #333; }
.gift { flex: none; height: 58px; padding: 13px 0 0 63px; border-bottom: 1px solid #ddd; }
.applist { flex: 1; min-height: 0; overflow: hidden; }
.cutoff { height: 20px; padding: 0 0 9px 79px; border-bottom: 1px solid #c8c8c8; overflow: hidden; display: flex; align-items: flex-end; }
.users { display: flex; align-items: center; gap: 9px; color: #999; fill: #a9a9a9; font-size: 14px; }
.app { display: flex; gap: 15px; padding: 11px 17px; height: 94px; }
.app + .app { border-top: 1px solid #c8c8c8; }
.app h2 { font: 400 19px/26px "Open Sans", sans-serif; color: #47799f; margin-top: -3px; }
.app p { font-size: 13px; line-height: 18px; margin-top: 6px; color: #555; white-space: nowrap; }
.app p.users { margin-top: 8px; color: #999; }
.trending { height: 45px; margin: 0; padding-left: 18px; display: flex; align-items: center; gap: 8px; background: #eee; color: #222; font-size: 14px; }
.trending + .app, .trending + .app + .app { height: 122px; padding-top: 10px; }
.updated {
  flex: none; height: 30px;
  display: flex; align-items: center; justify-content: center; gap: 7px;
  background: linear-gradient(100deg, #151b62, #1d3f84 40%, #23468c 80%, #1a2c6c); color: #fff; font-size: 17px;
}

/* Explorer windows */
.backdrop { left: 123px; top: 75px; width: 798px; height: 599px; padding: 7px 7px 8px; display: flex; flex-direction: column; gap: 3px; }
.backdrop .caption { justify-content: flex-end; padding: 2px 1px 0; }
.backdrop-body { flex: 1; background: #f7fafe; }
.explorer { left: 148px; top: 100px; width: 798px; height: 598px; padding: 8px 7px 7px; display: flex; flex-direction: column; }
.explorer > .caption { justify-content: flex-end; padding-right: 1px; }
.explorer-search { height: 23px; margin: 8px 0 6px; padding-right: 5px; background: #f8fbfe; border: 1px solid #9aaaba; display: flex; align-items: center; justify-content: flex-end; }
.explorer-tools { height: 32px; padding-right: 14px; display: flex; align-items: center; justify-content: flex-end; background: linear-gradient(#f2f7fc, #dbe6f3); border-bottom: 1px solid #a5b5c8; }
.sizes { flex: 1; padding: 31px 35px 0 0; list-style: none; background: #fdfeff; color: #666; font-size: 11px; text-align: right; }
.sizes li { height: 21px; line-height: 21px; padding-right: 4px; }
.sizes .picked { background: #f2f2f2; border: 1px solid #d8d8d8; line-height: 19px; padding-right: 3px; border-radius: 3px; }
.details { height: 52px; padding: 0 18px; display: flex; gap: 12px; background: #f2f5fc; border-top: 1px solid #d5dde8; white-space: nowrap; font-size: 11px; line-height: 18px; color: #5c6b7c; }
.details svg { margin-top: 3px; }
.details-name { display: flex; flex-direction: column; padding-top: 6px; width: 132px; }
.details-name strong { font-size: 12px; font-weight: 400; color: #111; }
.details dl { display: grid; grid-template-columns: 80px 1fr; column-gap: 5px; padding-top: 6px; align-content: start; }
.details dt { text-align: right; }
.details dd { color: #26303c; }
.created { padding-top: 6px; margin-left: 38px; color: #26303c; }
.outline { position: absolute; left: 172px; top: 85px; width: 679px; height: 558px; border: 1px solid #3b4456; border-radius: 6px 6px 0 0; background: #d3deea; }

/* Opera */
.opera {
  position: absolute; left: 126px; top: 91px; width: 770px; height: 549px;
  padding: 0 5px 9px; display: flex;
  background: linear-gradient(#eaf1f8, #dde7f1 60px, #e2ebf4);
}
.rail { width: 42px; flex: none; padding-left: 2px; display: flex; flex-direction: column; align-items: center; }
.rail button { width: 40px; height: 45px; }
.rail .rail-logo { height: 50px; }
.rail .rail-home { width: 24px; height: 24px; margin: 43px 0 10px; background: #0a98fb; border-radius: 2px; }
.rail hr { width: 12px; margin: 8px 0 7px; border: 0; border-top: 1px solid #aeb9c6; }
.rail .rail-more { border-top: 1px solid #b4bfca; margin-top: auto; height: 46px; padding-top: 6px; }
.browser { flex: 1; min-width: 0; display: flex; flex-direction: column; background: #fff; }
.tabstrip { height: 46px; flex: none; display: flex; background: linear-gradient(#e9f0f7, #e4ecf4 50%, #d9e2eb); align-items: flex-end; }
.tab { width: 64px; height: 32px; padding-left: 7px; gap: 3px; justify-content: flex-start; display: flex; align-items: center; border-right: 1px solid transparent; border-image: linear-gradient(transparent 25%, #b5bfca 25%, #b5bfca 75%, transparent 75%) 1; color: #777e88; font-size: 12px; }
.tab span { overflow: hidden; width: 29px; white-space: nowrap; text-align: left; -webkit-mask-image: linear-gradient(90deg, #000 60%, transparent); mask-image: linear-gradient(90deg, #000 60%, transparent); }
.tab.active { width: 62px; margin: 0 2px; padding-left: 4px; background: #fff; color: #222; border: 0; }
.tab.active span { width: 13px; -webkit-mask-image: none; mask-image: none; }
.tab.active button { margin-left: 4px; }
.tab.active + .tab { padding-left: 8px; }
.newtab { width: 28px; height: 32px; }
.find { height: 32px; margin: 0 14px 6px auto; }
.caption.live { align-self: flex-start; gap: 0; margin-right: 1px; border: 1px solid #4e5561; border-top: 0; border-radius: 0 0 4px 4px; overflow: hidden; }
.live button { width: 27px; height: 18px; border: 0; border-right: 1px solid #4e5561; border-radius: 0; background: linear-gradient(#eceff2, #b9bec4 60%, #d9dde1); }
.live .close { width: 46px; border: 0; background: linear-gradient(#e8a59a, #cc4a38 55%, #dd7057); }
.address { height: 38px; flex: none; padding: 0 15px 0 12px; display: flex; align-items: center; gap: 18px; }
.site { margin-left: 15px; opacity: .8; }
.url { flex: 1; font-size: 13px; color: #222; }
.url span { color: #7c7c7c; }
.fav { margin-left: -8px; }
.dl { position: relative; margin-left: 5px; }
.dl::after { content: ""; position: absolute; right: -5px; top: -6px; width: 8px; height: 8px; border-radius: 50%; background: #0c93ee; }
.bookmarks { height: 32px; flex: none; padding: 0 14px 4px; display: flex; align-items: center; gap: 13px; border-bottom: 1px solid #b9bec4; white-space: nowrap; color: #444; font-size: 11px; }
.bookmarks a { display: flex; align-items: center; gap: 8px; }
.settings-head { height: 64px; flex: none; padding: 0 30px; display: flex; align-items: center; gap: 12px; border-bottom: 1px solid #dfe3e8; }
.settings-head h1 { flex: 1; font-size: 16px; color: #333; }
.searchbox { width: 280px; height: 32px; padding: 0 13px 0 18px; border: 1px solid #3e8fb8; border-radius: 16px; display: flex; align-items: center; }
.searchbox input { flex: 1; min-width: 0; color: #222; font-size: 12px; }
.settings { flex: 1; min-height: 0; display: flex; }
.menu { width: 240px; flex: none; position: relative; padding: 43px 34px 0; display: flex; flex-direction: column; gap: 24px; background: #edf3f9; border-right: 1px solid #dfe5ea; font-size: 13px; line-height: 24px; color: #4e545b; }
.menu::after { content: ""; position: absolute; right: 2px; top: 3px; bottom: 11px; width: 8px; border-radius: 4px; background: #ced3d8; }
.menu .strong { font-weight: 600; }
.menu .open { position: relative; }
.menu .open::before { content: ""; position: absolute; left: -17px; top: 9px; border: 4px solid transparent; border-top: 0; border-bottom-color: #555; }
.help { margin-top: 18px; display: flex; flex-direction: column; gap: 8px; font-size: 12px; color: #1673ac; }
.help a { text-decoration: underline; }
.panel { flex: 1; min-width: 0; position: relative; overflow: hidden; padding: 0 22px 0 3px; }
.note { margin-left: -3px; line-height: 14px; color: #6d6d6d; white-space: nowrap; }
mark { background: #ffeb3b; color: #333; }
.panel-title { display: flex; justify-content: space-between; align-items: center; margin-top: 49px; line-height: 16px; color: #222; }
h2 { font-size: 12px; }
.panel table { width: 100%; table-layout: fixed; border-spacing: 0; margin-top: 14px; }
th, td { height: 48px; padding: 0; text-align: left; font-weight: 400; color: #6d6d6d; white-space: nowrap; }
th { padding-left: 3px; }
.c-site { width: 143px; padding-left: 1px; }
.c-user { width: 145px; }
.c-pass { width: 97px; padding-left: 4px; }
.c-eye { width: 28px; }
td { color: #333; }
td:last-child button { margin-left: auto; }
td input { width: 90px; font-size: 19px; color: #111; }
.sitecell { display: flex; justify-content: space-between; padding: 0 14px 0 1px; }
.sitecell a { color: #1673ac; text-decoration: underline; }
.eye { position: relative; margin-left: 4px; }
.hand { position: absolute; left: 0; top: 4px; filter: drop-shadow(2px 2px 1px #0005); }
.saved { margin-top: 34px; }
.never { margin: 30px 0 0 1px; white-space: nowrap; }
.bar-v { position: absolute; right: 2px; top: 141px; bottom: 13px; width: 8px; border-radius: 4px; background: #dadada; }
.bar-h { position: absolute; left: 104px; right: 28px; bottom: 1px; height: 8px; border-radius: 4px; background: #dadada; }

/* Jump list and taskbar */
.jump { position: absolute; left: 489px; top: 645px; width: 192px; height: 82px; padding: 8px 10px; display: flex; flex-direction: column; background: #75849a; border: 1px solid #e2e9f1; outline: 1px solid #465468; color: #fff; }
.jump button { flex: 1; padding-left: 8px; gap: 4px; justify-content: flex-start; white-space: nowrap; font: 12px/16px "Open Sans", sans-serif; }
.taskbar { height: 40px; flex: none; display: flex; position: relative; border-top: 1px solid #35465a; background: linear-gradient(90deg, #7688a0 0, #8799b3 50px, #a9c0de 130px, #a9c0dd 780px, #8c9db5 830px, #7a8ba2); }
.start { width: 54px; }
.tasks { display: flex; gap: 3px; padding-left: 5px; }
.tasks button { width: 59px; height: 39px; }
.tasks .on { border: 1px solid #46566b; border-radius: 3px; background: linear-gradient(120deg, #dbe6f3, #b0c3dc 60%, #bdcee3); box-shadow: inset 0 0 0 1px #e6eef7; }
.tasks .stack { width: 55px; margin-right: 4px; box-shadow: inset 0 0 0 1px #e6eef7, 2px 0 0 #b9cbe1, 3px 0 0 #5a6b80; }
.tasks .lit { background: linear-gradient(120deg, #fff, #eef3f9); }
.tasks .dim { background: linear-gradient(120deg, #c9cdd4, #8e949d 70%, #a9afb8); }
.tray { margin-left: auto; display: flex; align-items: center; gap: 8px; }
.tray button:first-child { margin-right: 4px; }
.clock { width: 70px; text-align: center; color: #fff; font-size: 12px; line-height: 17px; }
.tray .peek { width: 14px; height: 39px; margin-left: -7px; border: 1px solid #4f6076; background: linear-gradient(135deg, #7a8b9f, #b7c3d1 50%, #64758a); }
```
